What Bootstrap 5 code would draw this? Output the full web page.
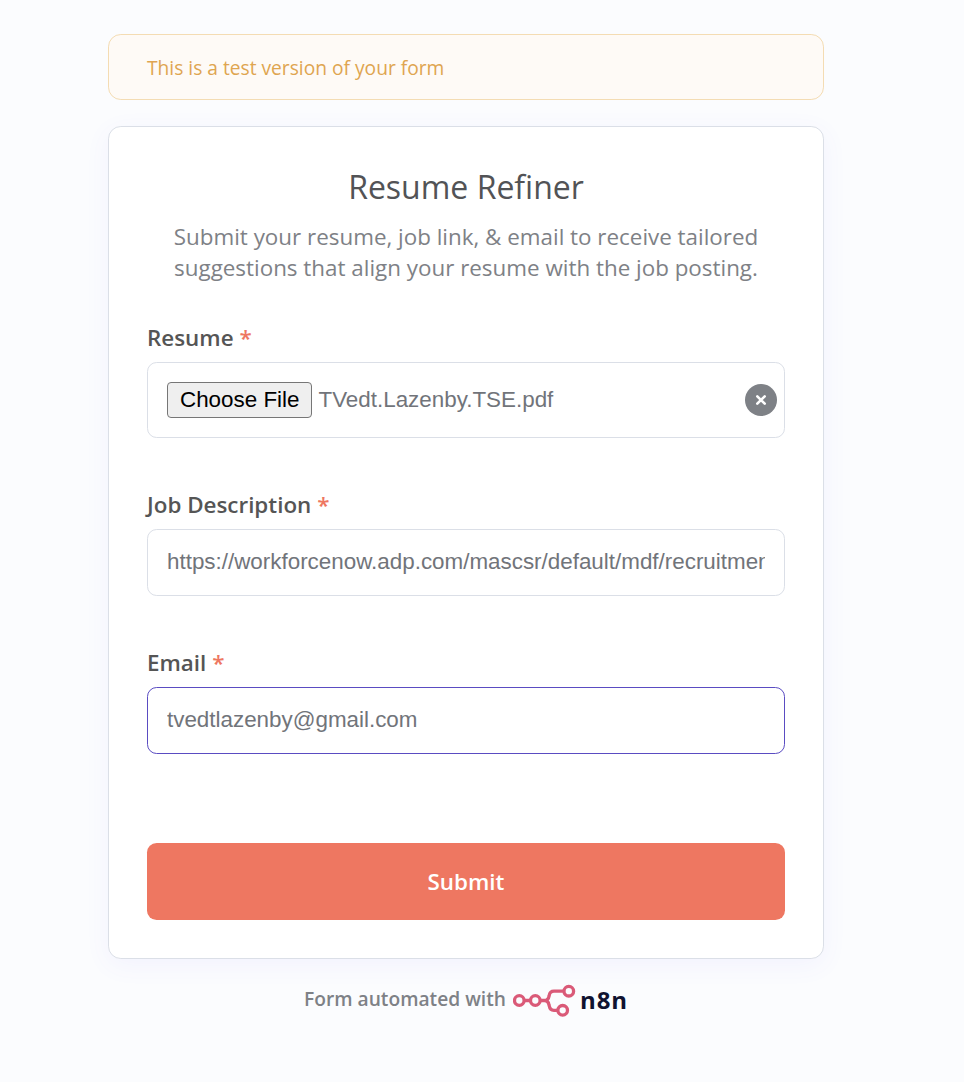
<!DOCTYPE html>
<html lang="en">
<head>
<meta charset="utf-8">
<meta name="viewport" content="width=device-width, initial-scale=1">
<title>Resume Refiner</title>
<link href="https://cdn.jsdelivr.net/npm/bootstrap@5.3.0/dist/css/bootstrap.min.css" rel="stylesheet">
<style>
  body { background: #fbfcfe; font-family: "Open Sans", sans-serif; color: #555555; overflow: hidden; }
  .form-page { width: 716px; margin-left: 108px; padding-top: 34px; }
  .test-notice { height: 66px; padding: 2px 38px 0; margin-bottom: 26px; background: #fefaf6; border: 1px solid #f4dcb3; border-radius: 12.8px; color: #dfa550; font-size: 19.2px; line-height: 26px; }
  .form-card { height: 833px; padding: 38px; border: 1px solid #dbdfe7; border-radius: 12.8px; box-shadow: 0 6px 26px rgba(99,77,255,.06); background: #fff; }
  .form-title { font-size: 32px; font-weight: 400; line-height: 44px; color: #525356; margin: 0 0 12px; }
  .form-intro { font-size: 22.4px; line-height: 31px; color: #7e8186; margin: 0 0 39px; }
  .field-label { font-size: 22.4px; line-height: 31px; font-weight: 600; color: #555555; margin: 0 0 9px; }
  .req { color: #ee7761; }
  .field-box { height: 67px; padding: 0 19px 1px; border: 1px solid #dbdfe7; border-radius: 9.6px; background: #fff; color: #71747a; font-family: "Liberation Sans", Arial, sans-serif; font-size: 22.4px; }
  .field-box:focus { box-shadow: none; border-color: #5a4cc2; color: #71747a; }
  .field-active { border-color: #5a4cc2; }
  .field-gap { margin-bottom: 51px; }
  .file-box { height: 76px; padding: 0 7px 0 19px; }
  .pick-btn { height: 36px; padding: 0 12px 1px; background: #efefef; border: 1px solid #767676; border-radius: 4px; color: #000; line-height: 33px; font-size: 22.4px; }
  .file-name { margin-left: 6px; }
  .clear-btn { width: 32px; height: 32px; background: #7e8186; border: 0; }
  .submit-btn { height: 77px; background: #ee7761; border: 0; border-radius: 9.6px; color: #fff; font-size: 22.4px; font-weight: 600; margin-top: 89px; }
  .submit-btn:hover { background: #ee7761; color: #fff; }
  .credit { margin-top: 24px; height: 34px; font-size: 19.2px; font-weight: 600; color: #7e8186; }
  .credit-text { padding-bottom: 2px; margin-right: 7px; }
  .brand-word { font-size: 24px; font-weight: 700; letter-spacing: .9px; color: #101330; line-height: 34px; margin-left: 3px; }
</style>
</head>
<body>
<main class="form-page">
  <div class="test-notice d-flex align-items-center">This is a test version of your form</div>
  <form class="form-card">
    <h1 class="form-title text-center">Resume Refiner</h1>
    <p class="form-intro text-center">Submit your resume, job link, &amp; email to receive tailored<br>suggestions that align your resume with the job posting.</p>

    <label class="field-label d-block">Resume <span class="req">*</span></label>
    <div class="field-box file-box field-gap d-flex align-items-center">
      <button type="button" class="pick-btn">Choose File</button>
      <span class="file-name flex-grow-1">TVedt.Lazenby.TSE.pdf</span>
      <button type="button" class="clear-btn rounded-circle p-0 d-flex align-items-center justify-content-center" aria-label="Clear">
        <svg width="12" height="12" viewBox="0 0 12 12"><path d="M2.3 2.3 9.7 9.7M9.7 2.3 2.3 9.7" stroke="#fff" stroke-width="2.6" stroke-linecap="round"/></svg>
      </button>
    </div>

    <label class="field-label d-block" for="job">Job Description <span class="req">*</span></label>
    <input id="job" type="text" class="form-control field-box field-gap" value="https://workforcenow.adp.com/mascsr/default/mdf/recruitment/recruitment.html">

    <label class="field-label d-block" for="email">Email <span class="req">*</span></label>
    <input id="email" type="email" class="form-control field-box field-active" value="tvedtlazenby@gmail.com">

    <button type="button" class="btn submit-btn w-100">Submit</button>
  </form>
  <div class="credit d-flex justify-content-center align-items-center">
    <span class="credit-text">Form automated with</span>
    <svg class="brand-mark" width="64" height="34" viewBox="0 0 64 34" fill="none" stroke="#da5a78" stroke-width="3.3">
      <circle cx="6.3" cy="17.5" r="4.8"/><circle cx="22.3" cy="17.5" r="4.8"/>
      <circle cx="55.8" cy="8.2" r="4.8"/><circle cx="49.7" cy="27.3" r="4.8"/>
      <path d="M11 17.5h6.5M27 17.5h4.4c2.8 0 4.2-1.7 4.6-4.2l.2-.9c.4-2.6 2-4.2 4.8-4.2h10M31.4 17.5c2.8 0 4.2 1.9 4.6 4.4l.3 1.2c.4 2.6 1.9 4.2 4.6 4.2h4"/>
    </svg>
    <span class="brand-word">n8n</span>
  </div>
</main>
<script src="https://cdn.jsdelivr.net/npm/bootstrap@5.3.0/dist/js/bootstrap.bundle.min.js"></script>
</body>
</html>
